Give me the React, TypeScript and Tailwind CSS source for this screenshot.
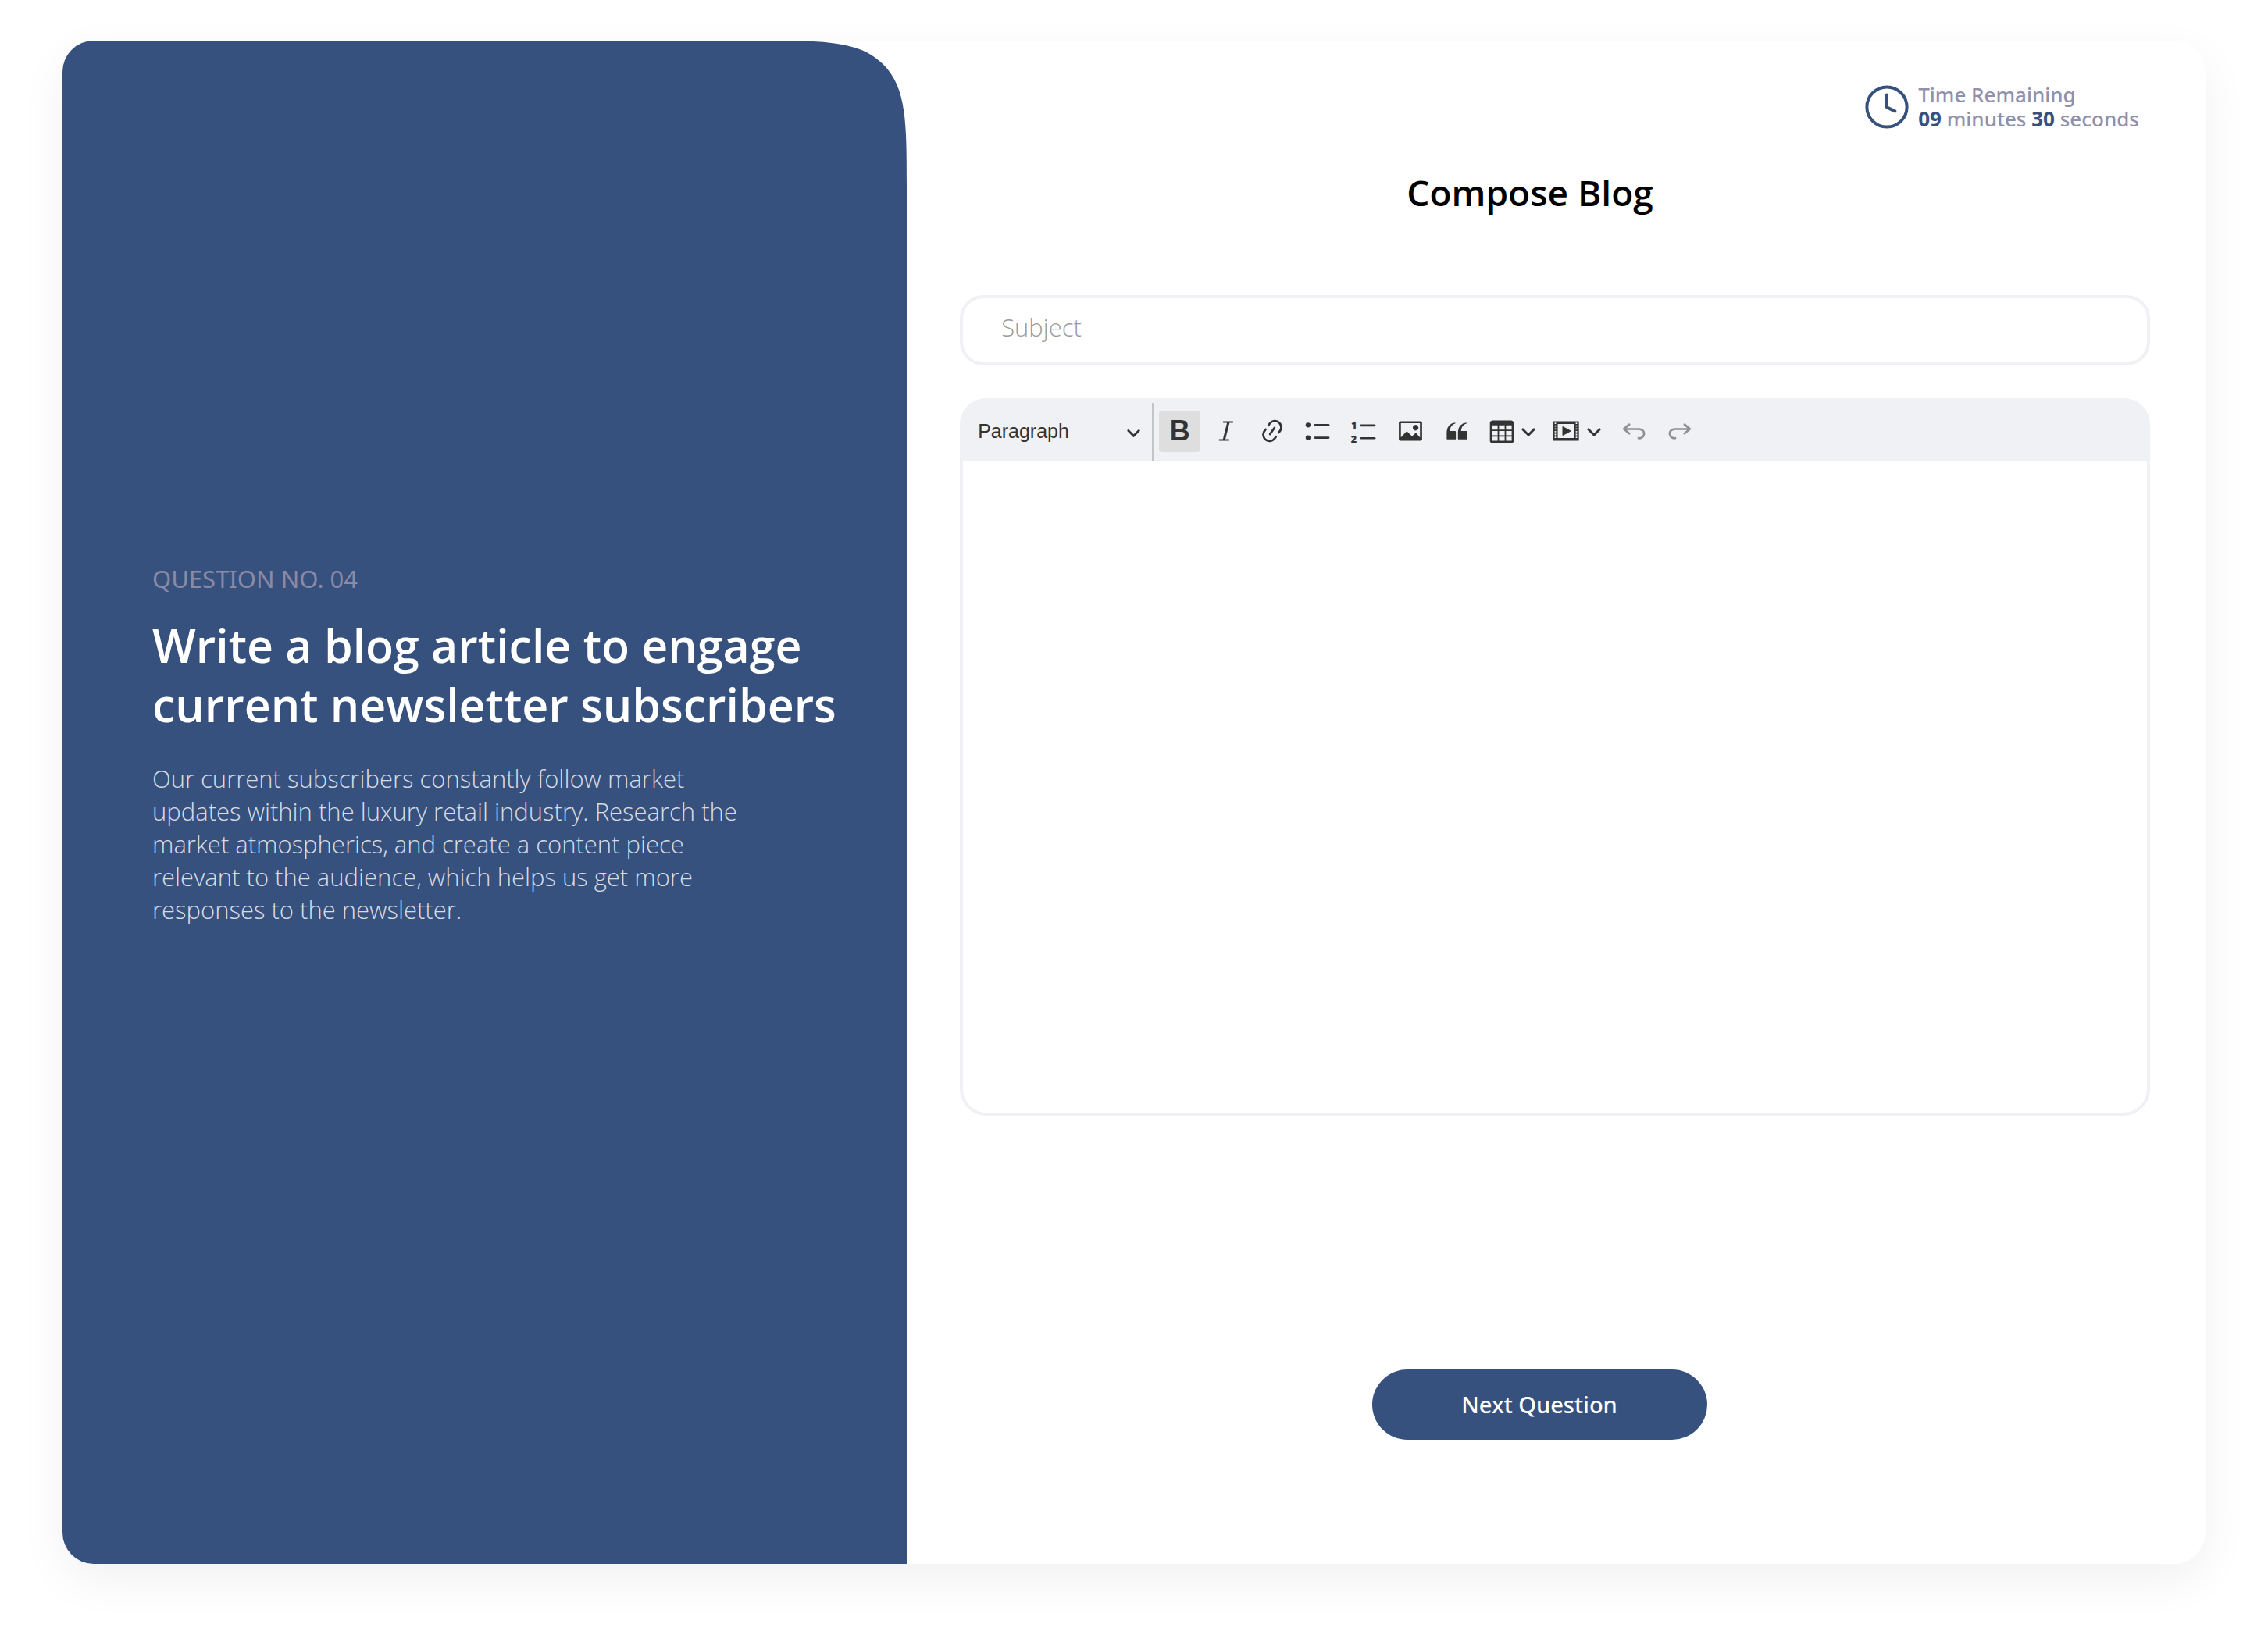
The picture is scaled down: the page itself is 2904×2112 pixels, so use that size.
import React from 'react';
import type { ReactNode } from 'react';

const PATHS = {
  link: 'm11.077 15 .991-1.416a.75.75 0 1 1 1.229.86l-1.148 1.64a.748.748 0 0 1-.217.206 5.251 5.251 0 0 1-8.503-5.955.741.741 0 0 1 .12-.274l1.147-1.639a.75.75 0 1 1 1.228.86L4.933 10.7l.006.003a3.75 3.75 0 0 0 6.132 4.294l.006.004zm5.494-5.335a.748.748 0 0 1-.12.274l-1.147 1.639a.75.75 0 1 1-1.228-.86l.86-1.23a3.75 3.75 0 0 0-6.144-4.301l-.86 1.229a.75.75 0 0 1-1.229-.86l1.148-1.64a.748.748 0 0 1 .217-.206 5.251 5.251 0 0 1 8.503 5.955zm-4.563-2.532a.75.75 0 0 1 .184 1.045l-3.155 4.505a.75.75 0 1 1-1.229-.86l3.155-4.506a.75.75 0 0 1 1.045-.184z',
  image:
    'M6.91 10.54c.26-.23.64-.21.88.03l3.36 3.14 2.23-2.06a.64.64 0 0 1 .87 0l2.52 2.97V4.5H3.2v10.12l3.71-4.08zm10.27-7.51c.6 0 1.09.47 1.09 1.05v11.84c0 .59-.49 1.06-1.09 1.06H2.79c-.6 0-1.09-.47-1.09-1.06V4.08c0-.58.49-1.05 1.1-1.05h14.38zm-5.22 5.56a1.96 1.96 0 1 1 3.4-1.96 1.96 1.96 0 0 1-3.4 1.96z',
  quote:
    'M3 10.423a6.5 6.5 0 0 1 6.056-6.408l.038.67C6.448 5.423 5.354 7.663 5.22 10H9c.552 0 .5.432.5.986v4.511c0 .554-.448.503-1 .503h-5c-.552 0-.5-.449-.5-1.003v-4.574zm8 0a6.5 6.5 0 0 1 6.056-6.408l.038.67c-2.646.739-3.74 2.979-3.873 5.315H17c.552 0 .5.432.5.986v4.511c0 .554-.448.503-1 .503h-5c-.552 0-.5-.449-.5-1.003v-4.574z',
  table:
    'M3 6v3h4V6H3zm0 4v3h4v-3H3zm0 4v3h4v-3H3zm5 3h4v-3H8v3zm5 0h4v-3h-4v3zm4-4v-3h-4v3h4zm0-4V6h-4v3h4zm1.5 8a1.5 1.5 0 0 1-1.5 1.5H3A1.5 1.5 0 0 1 1.5 17V4c.222-.863 1.068-1.5 2-1.5h13c.932 0 1.778.637 2 1.5v13zM12 13v-3H8v3h4zm0-4V6H8v3h4z',
  media:
    'M18.68 3.03c.6 0 .59-.03.59.55v12.84c0 .59.01.56-.59.56H1.29c-.6 0-.59.03-.59-.56V3.58c0-.58-.01-.55.6-.55h17.38zM15.77 15V5H4.2v10h11.57zM2 4v1h1V4H2zm0 2v1h1V6H2zm0 2v1h1V8H2zm0 2v1h1v-1H2zm0 2v1h1v-1H2zm0 2v1h1v-1H2zM17 4v1h1V4h-1zm0 2v1h1V6h-1zm0 2v1h1V8h-1zm0 2v1h1v-1h-1zm0 2v1h1v-1h-1zm0 2v1h1v-1h-1zM7.5 7.177a.4.4 0 0 1 .593-.351l5.133 2.824a.4.4 0 0 1 0 .7l-5.133 2.824a.4.4 0 0 1-.593-.35V7.176v.001z',
  undo: 'm5.042 9.367 2.189 1.837a.75.75 0 0 1-.965 1.149l-3.788-3.18a.747.747 0 0 1-.21-.284.75.75 0 0 1 .17-.945L6.23 4.762a.75.75 0 1 1 .964 1.15L4.863 7.866h8.917A.75.75 0 0 1 14 7.9a4 4 0 1 1-1.477 7.718l.344-1.489a2.5 2.5 0 1 0 1.094-4.73l.008-.032H5.042z',
  redo: 'm14.958 9.367-2.189 1.837a.75.75 0 0 0 .965 1.149l3.788-3.18a.747.747 0 0 0 .21-.284.75.75 0 0 0-.17-.945L13.77 4.762a.75.75 0 1 0-.964 1.15l2.331 1.955H6.22A.75.75 0 0 0 6 7.9a4 4 0 1 0 1.477 7.718l-.344-1.489A2.5 2.5 0 1 1 6.039 9.4l-.008-.032h8.927z',
};

function Icon({ name }: { name: keyof typeof PATHS }) {
  return (
    <svg viewBox="0 0 20 20" className="size-9 shrink-0 fill-current" aria-hidden="true">
      <path d={PATHS[name]} />
    </svg>
  );
}

function Chevron({ className }: { className: string }) {
  return (
    <svg viewBox="0 0 10 10" className={className} aria-hidden="true">
      <path d="M.941 4.523a.75.75 0 1 1 1.06-1.06l3.006 3.005 3.005-3.005a.75.75 0 1 1 1.06 1.06l-3.549 3.55a.75.75 0 0 1-1.168-.136L.941 4.523z" />
    </svg>
  );
}

function Tool({ label, active, disabled, children }: { label: string; active?: boolean; disabled?: boolean; children: ReactNode }) {
  return (
    <button
      type="button"
      aria-label={label}
      aria-pressed={active}
      disabled={disabled}
      className={
        'flex size-[53px] shrink-0 items-center justify-center rounded-sm' +
        (active ? ' bg-[#dedede]' : '') +
        (disabled ? ' opacity-50' : '')
      }
    >
      {children}
    </button>
  );
}

function Toolbar() {
  return (
    <div role="toolbar" aria-label="Formatting" className="flex h-20 items-center bg-[#f0f1f5] text-[#333333]">
      <div className="relative mt-1.5 h-[74px] w-[248px] shrink-0 border-r-2 border-[#c4c4c4]">
        <select
          aria-label="Text style"
          className="h-full w-full appearance-none bg-transparent pl-[23px] font-['Liberation_Sans',Arial,sans-serif] text-[25px] outline-none"
        >
          <option>Paragraph</option>
          <option>Heading 1</option>
          <option>Heading 2</option>
        </select>
        <Chevron className="pointer-events-none absolute top-7 right-3.5 size-[19px] fill-current" />
      </div>
      <div className="flex items-center gap-1.5 pt-1 pl-[7px]">
        <Tool label="Bold" active>
          <span className="font-['Liberation_Sans',Arial,sans-serif] text-[36px] leading-9 font-bold">B</span>
        </Tool>
        <Tool label="Italic">
          <svg viewBox="0 0 20 20" className="size-9 fill-none stroke-current" strokeLinecap="round" aria-hidden="true">
            <path strokeWidth="1.2" d="M8.15 3.6h6.44M5.3 16.4h6.44" />
            <path strokeWidth="1.7" strokeLinecap="butt" d="M11.6 3.8 8.5 16.2" />
          </svg>
        </Tool>
        <Tool label="Link">
          <Icon name="link" />
        </Tool>
        <Tool label="Bulleted list">
          <svg viewBox="0 0 20 20" className="size-9 fill-current" aria-hidden="true">
            <circle cx="2.75" cy="5.75" r="1.75" />
            <circle cx="2.75" cy="14.75" r="1.75" />
            <rect x="7" y="5" width="11" height="1.5" rx=".75" />
            <rect x="7" y="14" width="11" height="1.5" rx=".75" />
          </svg>
        </Tool>
        <Tool label="Numbered list">
          <svg viewBox="0 0 20 20" className="size-9 fill-current" aria-hidden="true">
            <text x="0.6" y="8.6" className="font-['Open_Sans',sans-serif] text-[7px] font-extrabold">1</text>
            <text x="0.4" y="18.2" className="font-['Open_Sans',sans-serif] text-[7px] font-extrabold">2</text>
            <rect x="7" y="5.3" width="11" height="1.5" rx=".75" />
            <rect x="7" y="14.4" width="11" height="1.5" rx=".75" />
          </svg>
        </Tool>
        <Tool label="Insert image">
          <Icon name="image" />
        </Tool>
        <Tool label="Block quote">
          <Icon name="quote" />
        </Tool>
        <button type="button" aria-label="Insert table" className="flex h-[53px] w-19 items-center gap-1.5 pl-2">
          <Icon name="table" />
          <Chevron className="size-5 shrink-0 fill-current" />
        </button>
        <button type="button" aria-label="Insert media" className="flex h-[53px] w-20 items-center gap-2 pl-2">
          <Icon name="media" />
          <Chevron className="size-5 shrink-0 fill-current" />
        </button>
        <Tool label="Undo" disabled>
          <Icon name="undo" />
        </Tool>
        <Tool label="Redo" disabled>
          <Icon name="redo" />
        </Tool>
      </div>
    </div>
  );
}

export default function App() {
  return (
    <main className="flex min-h-screen bg-white px-20 pt-[52px] pb-[109px] font-['Open_Sans',sans-serif]">
      <div className="flex flex-1 rounded-[40px] bg-white shadow-[0_20px_60px_rgba(0,0,0,0.06)]">
        <section className="flex w-[39.4%] flex-col justify-center rounded-l-[40px] rounded-tr-[190px] bg-[#37517e] pr-10 pb-[148px] pl-[115px] [corner-top-right-shape:squircle]">
          <p className="font-['Noto_Sans',sans-serif] text-[31px] leading-10 font-normal text-[#8a8aa5]">QUESTION NO. 04</p>
          <h1 className="mt-[27px] text-[59px] leading-[76px] font-semibold text-white">
            Write a blog article to engage current newsletter subscribers
          </h1>
          <p className="mt-9 max-w-[770px] text-[31px] leading-[42px] font-light text-[#d7dce5]">
            Our current subscribers constantly follow market updates within the luxury retail industry. Research the
            market atmospherics, and create a content piece relevant to the audience, which helps us get more responses
            to the newsletter.
          </p>
        </section>

        <section className="flex flex-1 flex-col pt-[54px] pr-[71px] pb-[159px] pl-[68px]">
          <div className="flex items-center gap-3 self-end pr-3.5">
            <svg viewBox="0 0 56 56" className="size-14 fill-none stroke-[#37517e]" strokeWidth="4" strokeLinecap="round" strokeLinejoin="round" aria-hidden="true">
              <circle cx="28" cy="28" r="25.6" />
              <path d="M28 12.5V28.4l10.4 5" />
            </svg>
            <p className="font-['Noto_Sans',sans-serif] text-[26px] leading-[31px] font-medium text-[#8f90ab]">
              Time Remaining
              <br />
              <b className="font-bold text-[#37517e]">09</b> minutes <b className="font-bold text-[#37517e]">30</b> seconds
            </p>
          </div>

          <h2 className="mt-[46px] pr-16 text-center text-[46px] leading-[64px] font-semibold text-black">Compose Blog</h2>

          <input
            type="text"
            aria-label="Subject"
            placeholder="Subject"
            className="mt-[100px] h-[90px] rounded-[30px] border-4 border-[#f0f1f5] bg-white px-[49px] pb-2 text-[31px] font-light text-black outline-none placeholder:text-[#9b9b9b]"
          />

          <div className="mt-[42px] flex flex-1 flex-col overflow-hidden rounded-[34px] bg-[#f0f1f5]">
            <Toolbar />
            <textarea
              aria-label="Blog content"
              className="mx-1 mb-1 flex-1 resize-none rounded-b-[30px] bg-white p-8 text-[31px] font-light outline-none"
            />
          </div>

          <div className="mt-[325px] flex justify-center pr-10">
            <button type="button" className="h-[90px] w-[429px] rounded-full bg-[#37517e] font-['Noto_Sans',sans-serif] text-[29px] font-medium text-white">
              Next Question
            </button>
          </div>
        </section>
      </div>
    </main>
  );
}
